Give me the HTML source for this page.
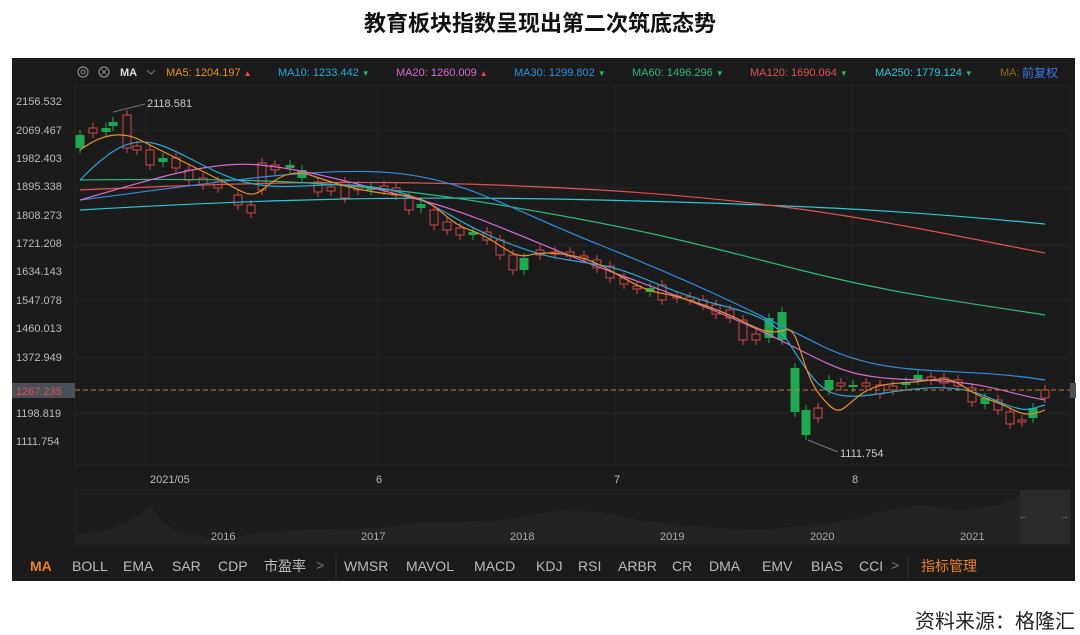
<!DOCTYPE html>
<html><head><meta charset="utf-8">
<style>
body{margin:0;width:1080px;height:635px;background:#fff;overflow:hidden;font-family:"Liberation Sans","Noto Sans CJK SC",sans-serif;position:relative}
.title{position:absolute;top:6px;left:0;width:1080px;text-align:center;font-size:22px;font-weight:bold;color:#111;font-family:"Liberation Sans","Noto Sans CJK SC",sans-serif}
.panel{position:absolute;left:12px;top:58px;width:1063px;height:523px;background:#1b1b1c}
.foot{position:absolute;left:915px;top:605px;font-size:20px;color:#222}
svg text{font-family:"Liberation Sans","Noto Sans CJK SC",sans-serif}
</style></head><body>
<div class="title">教育板块指数呈现出第二次筑底态势</div>
<div class="panel"></div>
<svg width="1080" height="635" style="position:absolute;left:0;top:0" id="s">
<g font-size="11">
<circle cx="83" cy="72" r="5" fill="none" stroke="#888" stroke-width="1.2"/><circle cx="83" cy="72" r="2" fill="none" stroke="#888"/>
<circle cx="104" cy="72" r="5" fill="none" stroke="#888" stroke-width="1.2"/><path d="M101.5 69.5l5 5M106.5 69.5l-5 5" stroke="#888"/>
<text x="120" y="76" fill="#ddd" font-weight="bold">MA</text><path d="M147 70l4 4 4-4" stroke="#777" fill="none"/>
<text x="166" y="76" fill="#e8902a">MA5: 1204.197 <tspan fill="#e84a4a" font-size="8">▲</tspan></text>
<text x="278" y="76" fill="#2aa8d8">MA10: 1233.442 <tspan fill="#28b85a" font-size="8">▼</tspan></text>
<text x="396" y="76" fill="#d86ad0">MA20: 1260.009 <tspan fill="#e84a4a" font-size="8">▲</tspan></text>
<text x="514" y="76" fill="#2f8ee0">MA30: 1299.802 <tspan fill="#28b85a" font-size="8">▼</tspan></text>
<text x="632" y="76" fill="#2eb87a">MA60: 1496.296 <tspan fill="#28b85a" font-size="8">▼</tspan></text>
<text x="750" y="76" fill="#e05050">MA120: 1690.064 <tspan fill="#28b85a" font-size="8">▼</tspan></text>
<text x="875" y="76" fill="#2ac8d8">MA250: 1779.124 <tspan fill="#28b85a" font-size="8">▼</tspan></text>
<text x="1000" y="76" fill="#8a6a20">MA:</text><text x="1022" y="77" fill="#3a7ae0" font-size="12">前复权</text>
</g>
<g stroke="#262628" stroke-width="1">
<line x1="75" y1="86" x2="1070" y2="86"/><line x1="75" y1="465" x2="1070" y2="465"/>
<line x1="75" y1="86" x2="75" y2="465"/><line x1="1070" y1="86" x2="1070" y2="465"/>
<line x1="146" y1="86" x2="146" y2="465"/><line x1="378" y1="86" x2="378" y2="465"/><line x1="615" y1="86" x2="615" y2="465"/><line x1="852" y1="86" x2="852" y2="465"/>
<line x1="75" y1="130" x2="1070" y2="130"/><line x1="75" y1="188" x2="1070" y2="188"/><line x1="75" y1="245" x2="1070" y2="245"/><line x1="75" y1="300" x2="1070" y2="300"/><line x1="75" y1="358" x2="1070" y2="358"/><line x1="75" y1="413" x2="1070" y2="413"/>
</g>
<g font-size="11" fill="#bbb">
<text x="16" y="105">2156.532</text><text x="16" y="134">2069.467</text><text x="16" y="162">1982.403</text><text x="16" y="190">1895.338</text><text x="16" y="219">1808.273</text><text x="16" y="247">1721.208</text><text x="16" y="275">1634.143</text><text x="16" y="304">1547.078</text><text x="16" y="332">1460.013</text><text x="16" y="361">1372.949</text><text x="16" y="417">1198.819</text><text x="16" y="445">1111.754</text>
<text x="150" y="483">2021/05</text><text x="376" y="483">6</text><text x="614" y="483">7</text><text x="852" y="483">8</text>
<text x="147" y="107" fill="#ccc">2118.581</text><text x="840" y="457" fill="#ccc">1111.754</text>
</g>
<path d="M113 112L145 104M808 440L838 452" stroke="#777" fill="none"/>
<g id="cd"></g>
<g id="ma" fill="none" stroke-width="1.2">
<path d="M80 210C250 200 400 195 600 200S900 210 1045 224" stroke="#2ac8d8"/>
<path d="M80 190C250 182 400 178 600 190S900 225 1045 253" stroke="#e05050"/>
<path d="M80 180C250 178 350 180 500 205S700 245 800 270S950 300 1045 315" stroke="#2eb87a"/>
<path d="M80 200C200 185 300 168 380 172S500 205 600 245S750 310 820 345S950 365 1045 380" stroke="#2f8ee0"/>
<path d="M80 200C150 180 210 160 260 165S360 185 420 200S550 250 620 275S740 320 790 345S850 378 920 380S1000 392 1045 400" stroke="#d86ad0"/>
<path d="M80 180C110 150 130 135 160 145S220 180 260 185S330 180 380 188S450 220 500 240S560 258 600 265S660 290 720 305S780 330 800 360S830 400 870 395S950 380 990 398S1030 408 1045 405" stroke="#2aa8d8"/>
<path d="M80 150C100 135 120 130 140 140S200 170 220 180S250 200 262 190S290 168 310 175S360 192 400 195S440 220 470 230S510 260 530 255S580 255 600 265S640 290 660 293S720 310 740 320S770 335 785 330S800 370 820 395S840 410 860 395S900 385 930 380S960 390 990 400S1020 420 1045 410" stroke="#e8902a"/>
</g>
<line x1="75" y1="390" x2="1070" y2="390" stroke="#d0702a" stroke-dasharray="5,3"/>
<rect x="12" y="383" width="63" height="15" fill="#4a5058"/><text x="16" y="395" font-size="11" fill="#e05050">1267.235</text>
<rect x="1070" y="383" width="6" height="15" fill="#4a5058"/>
<rect x="75" y="490" width="995" height="54" fill="#1d1d1e" stroke="#252527"/>
<path d="M75 535L110 530L140 515L150 505L160 520L175 530L220 540L260 532L300 530L380 528L420 522L460 522L500 520L530 515L560 510L600 512L640 520L680 525L720 528L760 530L800 526L840 522L880 512L920 505L960 510L1000 505L1020 495L1020 544L75 544Z" fill="#232325"/>
<rect x="1020" y="490" width="50" height="54" fill="#2a2a2c"/>
<text x="1019" y="519" font-size="9" fill="#888">←</text><text x="1060" y="519" font-size="9" fill="#888">→</text>
<g font-size="11" fill="#aaa"><text x="211" y="540">2016</text><text x="361" y="540">2017</text><text x="510" y="540">2018</text><text x="660" y="540">2019</text><text x="810" y="540">2020</text><text x="960" y="540">2021</text></g>
<g font-size="14" fill="#bbb">
<text x="30" y="571" fill="#e8802a" font-weight="bold">MA</text><text x="72" y="571">BOLL</text><text x="123" y="571">EMA</text><text x="172" y="571">SAR</text><text x="218" y="571">CDP</text><text x="264" y="571">市盈率</text><text x="316" y="570" fill="#777">&gt;</text>
<line x1="336" y1="556" x2="336" y2="578" stroke="#333"/>
<text x="344" y="571">WMSR</text><text x="406" y="571">MAVOL</text><text x="474" y="571">MACD</text><text x="536" y="571">KDJ</text><text x="578" y="571">RSI</text><text x="618" y="571">ARBR</text><text x="672" y="571">CR</text><text x="709" y="571">DMA</text><text x="762" y="571">EMV</text><text x="811" y="571">BIAS</text><text x="859" y="571">CCI</text><text x="891" y="570" fill="#777">&gt;</text>
<line x1="908" y1="556" x2="908" y2="578" stroke="#333"/>
<text x="921" y="571" fill="#e8802a">指标管理</text>
</g>
</svg>
<div class="foot">资料来源：格隆汇</div>
<script>
var c=[[80,135,148],[93,133,128],[106,128,132],[113,122,126],[127,148,115],[137,150,146],[150,165,150],[163,158,162],[176,168,158],[189,180,170],[203,185,178],[218,188,182],[238,205,195],[251,213,205],[262,190,163],[275,170,165],[290,165,168],[302,170,178],[318,192,182],[331,191,187],[345,198,182],[358,190,186],[371,188,190],[384,190,186],[396,195,188],[409,210,198],[421,204,208],[434,225,210],[447,230,222],[460,235,228],[473,232,235],[487,240,232],[500,255,240],[513,270,255],[524,258,270],[540,255,250],[555,254,252],[570,256,252],[584,258,256],[597,268,260],[610,278,266],[624,284,278],[637,289,286],[650,288,292],[662,300,285],[677,298,296],[690,300,297],[703,305,300],[716,314,305],[730,318,310],[743,340,320],[756,340,334],[769,318,338],[782,312,340],[795,368,412],[806,410,435],[818,418,408],[829,380,390],[841,386,383],[853,385,385],[866,386,383],[880,394,385],[893,390,386],[906,382,385],[918,375,380],[931,380,377],[944,383,378],[958,386,380],[972,402,388],[985,398,404],[998,410,400],[1010,424,412],[1022,422,420],[1033,408,418],[1045,398,390]];
var g=document.getElementById('cd'),h='';
c.forEach(function(d){var up=d[2]<d[1],col=up?'#d04848':'#1fa850',t=Math.min(d[1],d[2]),b=Math.max(d[1],d[2]);if(b-t<2)b=t+2;
h+='<line x1="'+d[0]+'" y1="'+(t-5)+'" x2="'+d[0]+'" y2="'+(b+5)+'" stroke="'+col+'"/>';
h+=up?'<rect x="'+(d[0]-4)+'" y="'+t+'" width="8" height="'+(b-t)+'" fill="#1b1b1c" stroke="'+col+'"/>':'<rect x="'+(d[0]-4.5)+'" y="'+t+'" width="9" height="'+(b-t)+'" fill="'+col+'"/>';});
g.innerHTML=h;
</script>
</body></html>
